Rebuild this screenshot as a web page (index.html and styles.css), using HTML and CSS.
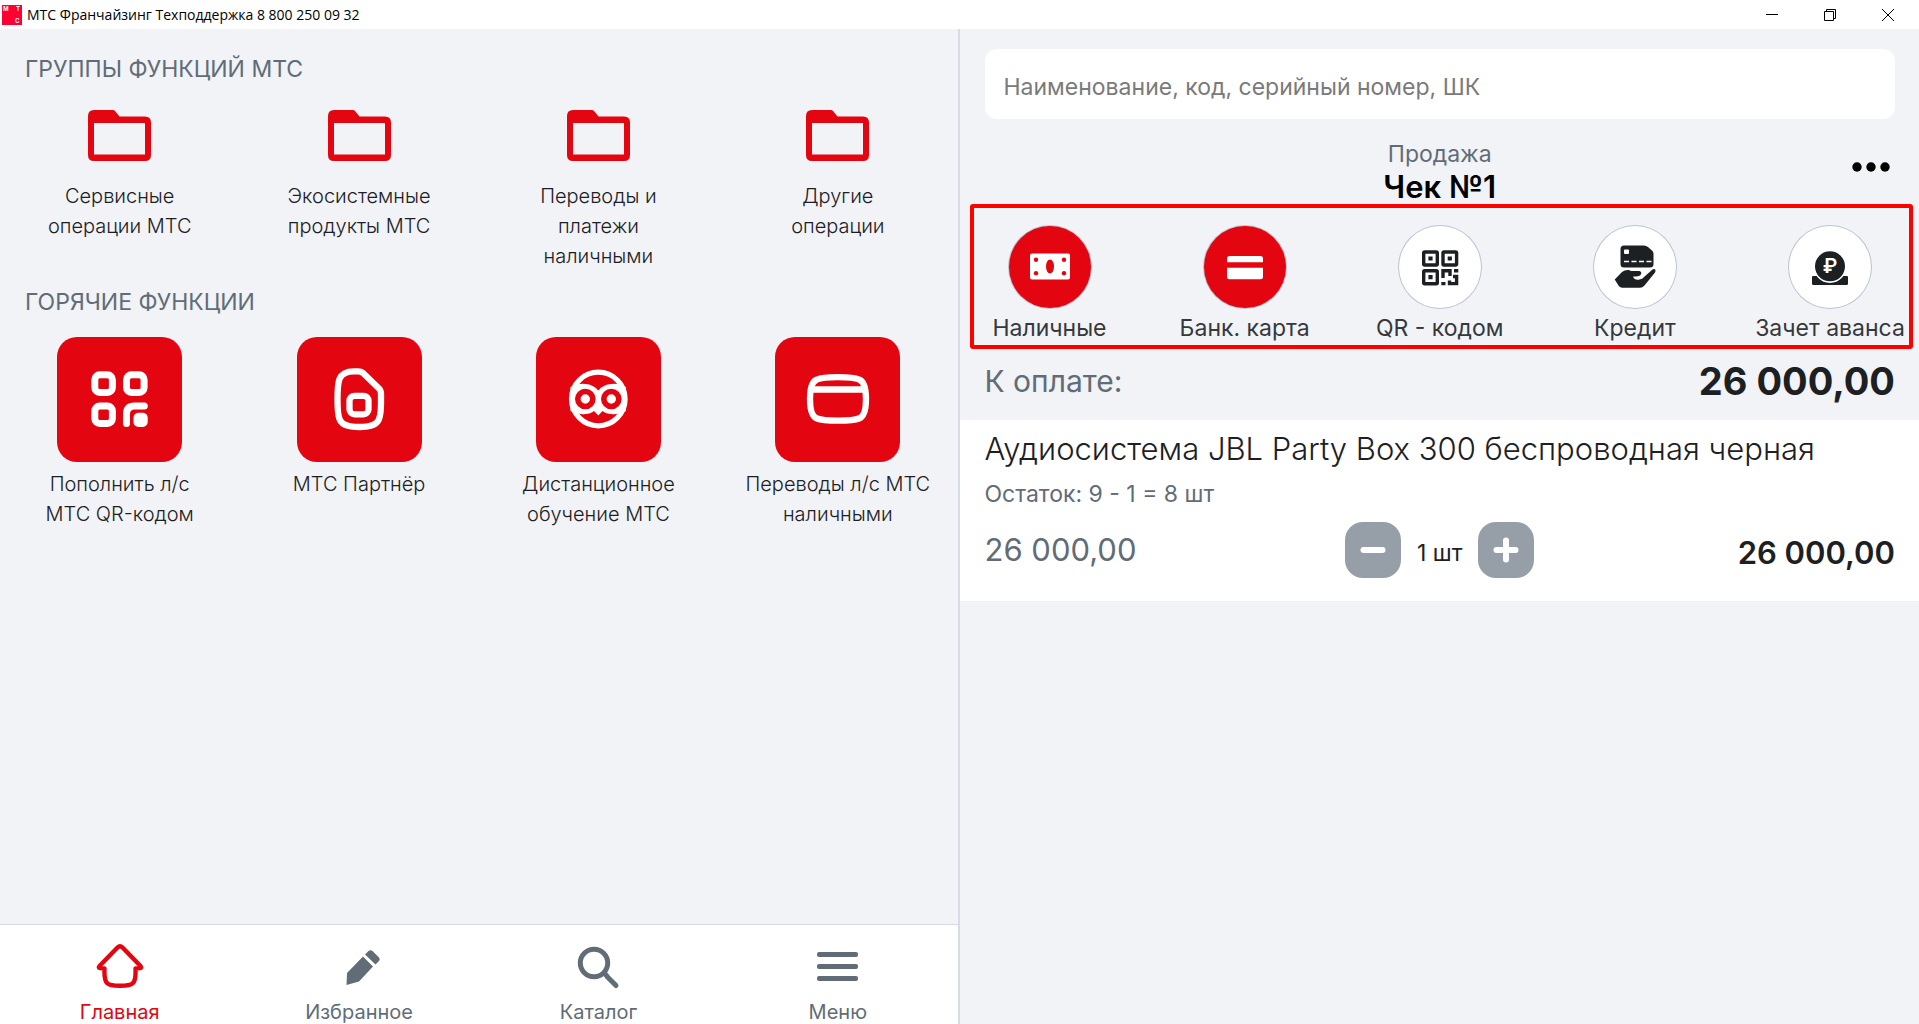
FILE: index.html
```
<!DOCTYPE html>
<html lang="ru">
<head>
<meta charset="utf-8">
<meta name="viewport" content="width=device-width, initial-scale=1">
<title>МТС Франчайзинг Техподдержка 8 800 250 09 32</title>
<link rel="stylesheet" href="styles.css">
</head>
<body>
<svg class="sprite" aria-hidden="true">
  <symbol id="folder" viewBox="0 0 63 51">
    <path fill="currentColor" fill-rule="evenodd" d="M6 0H25Q26 0 27 1L31.500 6.500H57Q63 6.500 63 12.500V45Q63 51 57 51H6Q0 51 0 45V6Q0 0 6 0ZM6 13V44.500H57V13Z"/>
  </symbol>
</svg>

<header class="titlebar">
  <svg class="titlebar-logo" viewBox="0 0 20 20" aria-hidden="true">
    <rect width="20" height="20" fill="#ff0032"/>
    <g fill="#fff" font-family="Inter, sans-serif" font-size="6" font-weight="700">
      <text x="1" y="6">М</text><text x="14" y="6">Т</text><text x="13" y="18">С</text>
    </g>
  </svg>
  <span class="titlebar-text">МТС Франчайзинг Техподдержка 8 800 250 09 32</span>
  <div class="titlebar-controls">
    <button type="button" aria-label="Свернуть"><svg viewBox="0 0 12 12"><path d="M0 5.500H12"/></svg></button>
    <button type="button" aria-label="Свернуть в окно"><svg viewBox="0 0 12 12"><path d="M.5 2.500H9.500V11.500H.5ZM2.500 2.500V.5H11.500V9.500H9.500"/></svg></button>
    <button type="button" aria-label="Закрыть"><svg viewBox="0 0 12 12"><path d="M0 0L12 12M12 0L0 12"/></svg></button>
  </div>
</header>

<div class="workspace">
  <main class="functions">
    <div class="functions-body">
      <h2 class="section-title">ГРУППЫ ФУНКЦИЙ МТС</h2>
      <div class="groups">
        <button type="button" class="group"><svg class="folder"><use href="#folder"/></svg><span>Сервисные<br>операции МТС</span></button>
        <button type="button" class="group"><svg class="folder"><use href="#folder"/></svg><span>Экосистемные продукты МТС</span></button>
        <button type="button" class="group"><svg class="folder"><use href="#folder"/></svg><span>Переводы и<br>платежи<br>наличными</span></button>
        <button type="button" class="group"><svg class="folder"><use href="#folder"/></svg><span>Другие<br>операции</span></button>
      </div>

      <h2 class="section-title">ГОРЯЧИЕ ФУНКЦИИ</h2>
      <div class="hot">
        <button type="button" class="hot-item">
          <svg class="tile" viewBox="0 0 125 125" fill="none" stroke="#fff" stroke-width="7">
            <rect x="37.800" y="37.800" width="17.600" height="17.600" rx="5"/>
            <rect x="69.500" y="37.800" width="17.600" height="17.600" rx="5"/>
            <rect x="37.800" y="69" width="17.600" height="17.600" rx="5"/>
            <path stroke-linecap="round" d="M69.500 86.500V77Q69.500 69 77.500 69H87.300"/>
            <rect x="76.500" y="75.800" width="14.200" height="14.200" rx="5" fill="#fff" stroke="none"/>
          </svg>
          <span>Пополнить л/с<br>МТС QR-кодом</span>
        </button>
        <button type="button" class="hot-item">
          <svg class="tile" viewBox="0 0 125 125" fill="none" stroke="#fff" stroke-width="6.300">
            <path stroke-linejoin="round" d="M61 34.300Q64 34.300 66 36L82 51.500Q84 53.500 84 57V66Q84 77 82 82Q79.500 90 62.200 90Q45 90 42.500 82Q40.500 77 40.500 62.500Q40.500 47 42.500 42Q45.500 34.300 57 34.300Z"/>
            <rect x="52.500" y="58.800" width="19" height="18.500" rx="5"/>
          </svg>
          <span>МТС Партнёр</span>
        </button>
        <button type="button" class="hot-item">
          <svg class="tile" viewBox="0 0 125 125" fill="#fff">
            <circle cx="62.300" cy="62" r="26.800" fill="none" stroke="#fff" stroke-width="5.200"/>
            <path d="M34.500 50Q42 46 49.300 47Q57.500 47.500 62.300 53.500Q67 47.500 75.300 47Q83 46 90 50V74Q83 78 75.300 77Q70 77 66.500 74L62.300 78.500L58 74Q54.500 77 49.300 77Q42 78 34.500 74Z"/>
            <circle cx="49.300" cy="62" r="7.500" stroke="#e30611" stroke-width="5.600"/>
            <circle cx="75.300" cy="62" r="7.500" stroke="#e30611" stroke-width="5.600"/>
          </svg>
          <span>Дистанционное<br>обучение МТС</span>
        </button>
        <button type="button" class="hot-item">
          <svg class="tile" viewBox="0 0 125 125" fill="none" stroke="#fff" stroke-width="6.300">
            <path d="M63 40.200Q79 40.200 84 42.500Q91 45 91 62Q91 79 84 81.500Q79 83.700 63 83.700Q47 83.700 42 81.500Q35 79 35 62Q35 45 42 42.500Q47 40.200 63 40.200Z"/>
            <path d="M37 52.500H89"/>
          </svg>
          <span>Переводы л/с МТС<br>наличными</span>
        </button>
      </div>
    </div>

    <nav class="tabs">
      <a href="#home" class="tab tab-active">
        <svg viewBox="0 0 48 48" fill="none" stroke="currentColor" stroke-width="4.400" stroke-linejoin="round"><path d="M21.500 5.500Q24 3 26.500 5.500L44.500 24Q46 26 44 26L39.500 26.500Q40 38 37 41Q34.500 43.800 24 43.800Q13.500 43.800 11 41Q8 38 8.500 26.500L4 26Q2 26 3.500 24Z"/></svg>
        Главная
      </a>
      <a href="#favorites" class="tab">
        <svg viewBox="0 0 48 48" fill="currentColor"><path d="M28 14.500L38 24.500L24 39.500L11.500 43L12 31ZM30 12.500L33.500 9Q35.500 7.500 37.500 9L44 15.500Q45.500 17.500 44 19L40.500 22.500Z"/></svg>
        Избранное
      </a>
      <a href="#catalog" class="tab">
        <svg viewBox="0 0 48 48" fill="none" stroke="currentColor" stroke-width="5"><circle cx="20" cy="21" r="13.700"/><path stroke-linecap="round" d="M33 34.500L42 43.500M30 31L33 34"/></svg>
        Каталог
      </a>
      <a href="#menu" class="tab">
        <svg viewBox="0 0 48 48" fill="currentColor"><rect x="3" y="10" width="41" height="5" rx="2"/><rect x="3" y="22" width="41" height="5" rx="2"/><rect x="3" y="34" width="41" height="5" rx="2"/></svg>
        Меню
      </a>
    </nav>
  </main>

  <section class="receipt">
    <input class="search" type="search" aria-label="Поиск товара" placeholder="Наименование, код, серийный номер, ШК">

    <div class="receipt-head">
      <div class="receipt-title">
        <p>Продажа</p>
        <h1>Чек №1</h1>
      </div>
      <button type="button" class="more" aria-label="Ещё"><svg viewBox="0 0 38 10"><circle cx="5" cy="5" r="4.700"/><circle cx="19" cy="5" r="4.700"/><circle cx="33" cy="5" r="4.700"/></svg></button>
    </div>

    <div class="payments">
      <button type="button" class="payment payment-active">
        <svg viewBox="0 0 82 82"><rect x="21" y="27.500" width="40" height="26" rx="2" fill="#fff"/><g fill="#e30611"><ellipse cx="41" cy="40.500" rx="4" ry="7"/><circle cx="27" cy="33.800" r="2.200"/><circle cx="55" cy="33.800" r="2.200"/><circle cx="27" cy="47.300" r="2.200"/><circle cx="55" cy="47.300" r="2.200"/></g></svg>
        <span>Наличные</span>
      </button>
      <button type="button" class="payment payment-active">
        <svg viewBox="0 0 82 82" fill="#fff"><path d="M25.500 30H56.500Q59 30 59 32.500V36.300H23V32.500Q23 30 25.500 30ZM23 41.700H59V50.800Q59 53.300 56.500 53.300H25.500Q23 53.300 23 50.800Z"/></svg>
        <span>Банк. карта</span>
      </button>
      <button type="button" class="payment">
        <svg viewBox="0 0 82 82" fill="none" stroke="#1d2023" stroke-width="3.400">
          <rect x="24.700" y="26" width="13.600" height="13" rx="1"/><rect x="44" y="26" width="13.600" height="13" rx="1"/><rect x="24.700" y="44.700" width="13.600" height="13" rx="1"/>
          <path d="M29.400 32.500H33.600M48.700 32.500H52.900M29.400 51.200H33.600" stroke-width="4.200"/>
          <path d="M44 52V44.700H51V50M55 44.700H59.300M42.300 57.600H46.500M50.500 59.300V54.500M50.500 57.600H57.600V50.500H54"/>
        </svg>
        <span>QR - кодом</span>
      </button>
      <button type="button" class="payment">
        <svg viewBox="0 0 82 82" fill="#1d2023">
          <path d="M30 19.500H50Q52 19.500 54 21L58.500 25Q59.500 26 59.500 28V38Q59.500 41.500 56 41.500H30Q26.500 41.500 26.500 38V23Q26.500 19.500 30 19.500Z"/>
          <rect x="30" y="23.500" width="5" height="4.500" rx="1" fill="#fff"/>
          <path d="M30 35.500H58" stroke="#fff" stroke-width="1.600" stroke-dasharray="5 2.500"/>
          <path d="M20.700 53.500L28 46Q31 43.500 35 44L37 45H45.500Q48.500 46 46.500 49Q45 50.500 39 50.500Q40.500 54.500 45.500 53.500Q48.500 53 50 51L58.500 43.500Q60.500 42.500 61.500 44Q61.500 45.500 61 46.500L50.500 59.500Q48.500 61.700 46 61.700H28Q25.500 61.500 24.500 59.500Z"/>
        </svg>
        <span>Кредит</span>
      </button>
      <button type="button" class="payment">
        <svg viewBox="0 0 82 82" fill="#1d2023">
          <path d="M24 50H58Q59 50 59 51V57.500Q59 59 57.500 59H24.500Q23 59 23 57.500V51Q23 50 24 50Z"/>
          <circle cx="41" cy="40.300" r="15.800" stroke="#fff" stroke-width="1.600"/>
          <text x="41" y="47" text-anchor="middle" fill="#fff" font-family="Inter, sans-serif" font-size="20" font-weight="600">₽</text>
        </svg>
        <span>Зачет аванса</span>
      </button>
      <div class="highlight" aria-hidden="true"></div>
    </div>

    <div class="total">
      <span class="total-label">К оплате:</span>
      <strong class="total-sum">26 000,00</strong>
    </div>

    <article class="item">
      <h3 class="item-name">Аудиосистема JBL Party Box 300 беспроводная черная</h3>
      <p class="item-stock">Остаток: 9 - 1 = 8 шт</p>
      <div class="item-row">
        <span class="item-price">26 000,00</span>
        <div class="quantity">
          <button type="button" aria-label="Уменьшить"><svg viewBox="0 0 26 26"><path d="M3.500 13H22.500"/></svg></button>
          <span class="quantity-value">1 шт</span>
          <button type="button" aria-label="Увеличить"><svg viewBox="0 0 26 26"><path d="M3.500 13H22.500M13 3.500V22.500"/></svg></button>
        </div>
        <strong class="item-sum">26 000,00</strong>
      </div>
    </article>
  </section>
</div>
</body>
</html>
```
FILE: styles.css
```
:root {
  --red: #e30611;
  --ink: #1d2023;
  --muted: #626c77;
  --label: #36383b;
  --bg: #f1f3f7;
  --line: #d6dbe5;
}

* { box-sizing: border-box; }

body {
  margin: 0;
  min-height: 100vh;
  display: flex;
  flex-direction: column;
  background: var(--bg);
  color: var(--ink);
  font-family: Inter, "Liberation Sans", sans-serif;
}

h1, h2, h3, p { margin: 0; font-weight: 400; }

button {
  padding: 0;
  border: 0;
  background: none;
  color: inherit;
  font: inherit;
  cursor: pointer;
}

svg { display: block; }
.sprite { display: none; }

/* Window title bar */
.titlebar {
  display: flex;
  align-items: center;
  height: 29px;
  padding: 0 2px;
  background: #fff;
  color: #000;
}
.titlebar-logo { width: 20px; height: 20px; }
.titlebar-text {
  margin-left: 5px;
  font: 14px/20px "Open Sans", "Noto Sans", sans-serif;
}
.titlebar-controls { display: flex; margin-left: auto; }
.titlebar-controls button {
  display: grid;
  place-items: center;
  width: 58px;
  height: 28px;
}
.titlebar-controls svg {
  width: 12px;
  height: 12px;
  fill: none;
  stroke: #000;
}

.workspace {
  flex: 1;
  display: grid;
  grid-template-columns: 1fr 1fr;
}

/* Left pane */
.functions {
  display: flex;
  flex-direction: column;
  min-width: 0;
  border-right: 2px solid var(--line);
}
.functions-body {
  flex: 1;
  padding-top: 24px;
}
.section-title {
  padding: 0 25px;
  color: var(--muted);
  font-size: 23px;
  line-height: 32px;
}
.groups, .hot, .tabs {
  display: grid;
  grid-template-columns: repeat(4, 1fr);
}
.groups { padding: 25px 0 15px; }
.hot { padding: 19px 0; }
.group, .hot-item {
  display: flex;
  flex-direction: column;
  align-items: center;
  padding: 0 24px;
  font-size: 20px;
  font-weight: 300;
  line-height: 30px;
}
.group { gap: 20px; }
.hot-item { gap: 7px; }
.folder { width: 63px; height: 51px; color: var(--red); }
.tile {
  width: 125px;
  height: 125px;
  border-radius: 20px;
  background: var(--red);
}
.tabs {
  border-top: 1px solid var(--line);
  background: #fff;
}
.tab {
  display: flex;
  flex-direction: column;
  align-items: center;
  gap: 10px;
  padding-top: 17px;
  color: var(--muted);
  font-size: 20px;
  line-height: 24px;
  text-decoration: none;
}
.tab svg { width: 48px; height: 48px; }
.tab-active { color: var(--red); }

/* Right pane */
.receipt { min-width: 0; padding-top: 20px; }
.search {
  display: block;
  width: calc(100% - 49px);
  height: 70px;
  margin: 0 24px 0 25px;
  padding: 5px 20px 0 19px;
  border: 0;
  border-radius: 12px;
  background: #fff;
  color: var(--ink);
  font: 23px "Inter", "Liberation Sans", sans-serif;
  appearance: none;
}
.search::placeholder { color: #7a7a7a; opacity: 1; }

.receipt-head {
  display: grid;
  grid-template-columns: 1fr auto 1fr;
  align-items: center;
  padding: 21px 29px 0 30px;
}
.receipt-title { grid-column: 2; text-align: center; }
.receipt-title p {
  color: var(--muted);
  font-size: 23px;
  line-height: 28px;
}
.receipt-title h1 {
  color: #000;
  font-size: 31px;
  font-weight: 600;
  line-height: 38px;
}
.more {
  justify-self: end;
  padding: 10px 0 22px;
}
.more svg { width: 38px; height: 10px; }

.payments {
  position: relative;
  display: flex;
  justify-content: space-between;
  padding: 20px 24px 0 25px;
}
.payment {
  display: flex;
  flex-direction: column;
  align-items: center;
  gap: 5px;
  width: 130px;
  color: var(--label);
  font-size: 23px;
  line-height: 30px;
  white-space: nowrap;
}
.payment svg {
  width: 82px;
  height: 82px;
  border-radius: 50%;
  background: #fff;
  box-shadow: 0 0 0 1px #bcc3d0;
}
.payment-active svg { background: var(--red); }
.highlight {
  position: absolute;
  inset: -2px 6px -6px 10px;
  border: 4px solid #f00;
  border-radius: 3px;
  pointer-events: none;
}

.total {
  display: flex;
  align-items: center;
  justify-content: space-between;
  padding: 15px 24px 16px 25px;
  line-height: 46px;
}
.total-label { color: var(--muted); font-size: 30px; }
.total-sum { font-size: 38px; font-weight: 700; }

.item {
  padding: 9px 24px 23px 25px;
  background: #fff;
}
.item-name { font-size: 31px; font-weight: 300; line-height: 40px; }
.item-stock {
  margin-top: 10px;
  color: var(--muted);
  font-size: 23px;
  line-height: 30px;
}
.item-row {
  display: grid;
  grid-template-columns: 1fr auto 1fr;
  align-items: center;
  margin-top: 13px;
}
.item-price {
  padding-bottom: 2px;
  color: var(--muted);
  font-size: 31px;
}
.item-sum {
  padding-top: 5px;
  font-size: 31px;
  font-weight: 600;
  text-align: right;
}
.quantity {
  display: flex;
  align-items: center;
  gap: 16px;
}
.quantity button {
  display: grid;
  place-items: center;
  width: 56px;
  height: 56px;
  border-radius: 18px;
  background: #969fa8;
}
.quantity svg {
  width: 26px;
  height: 26px;
  stroke: #fff;
  stroke-width: 6;
  stroke-linecap: round;
}
.quantity-value { padding-top: 5px; font-size: 23px; }
```
